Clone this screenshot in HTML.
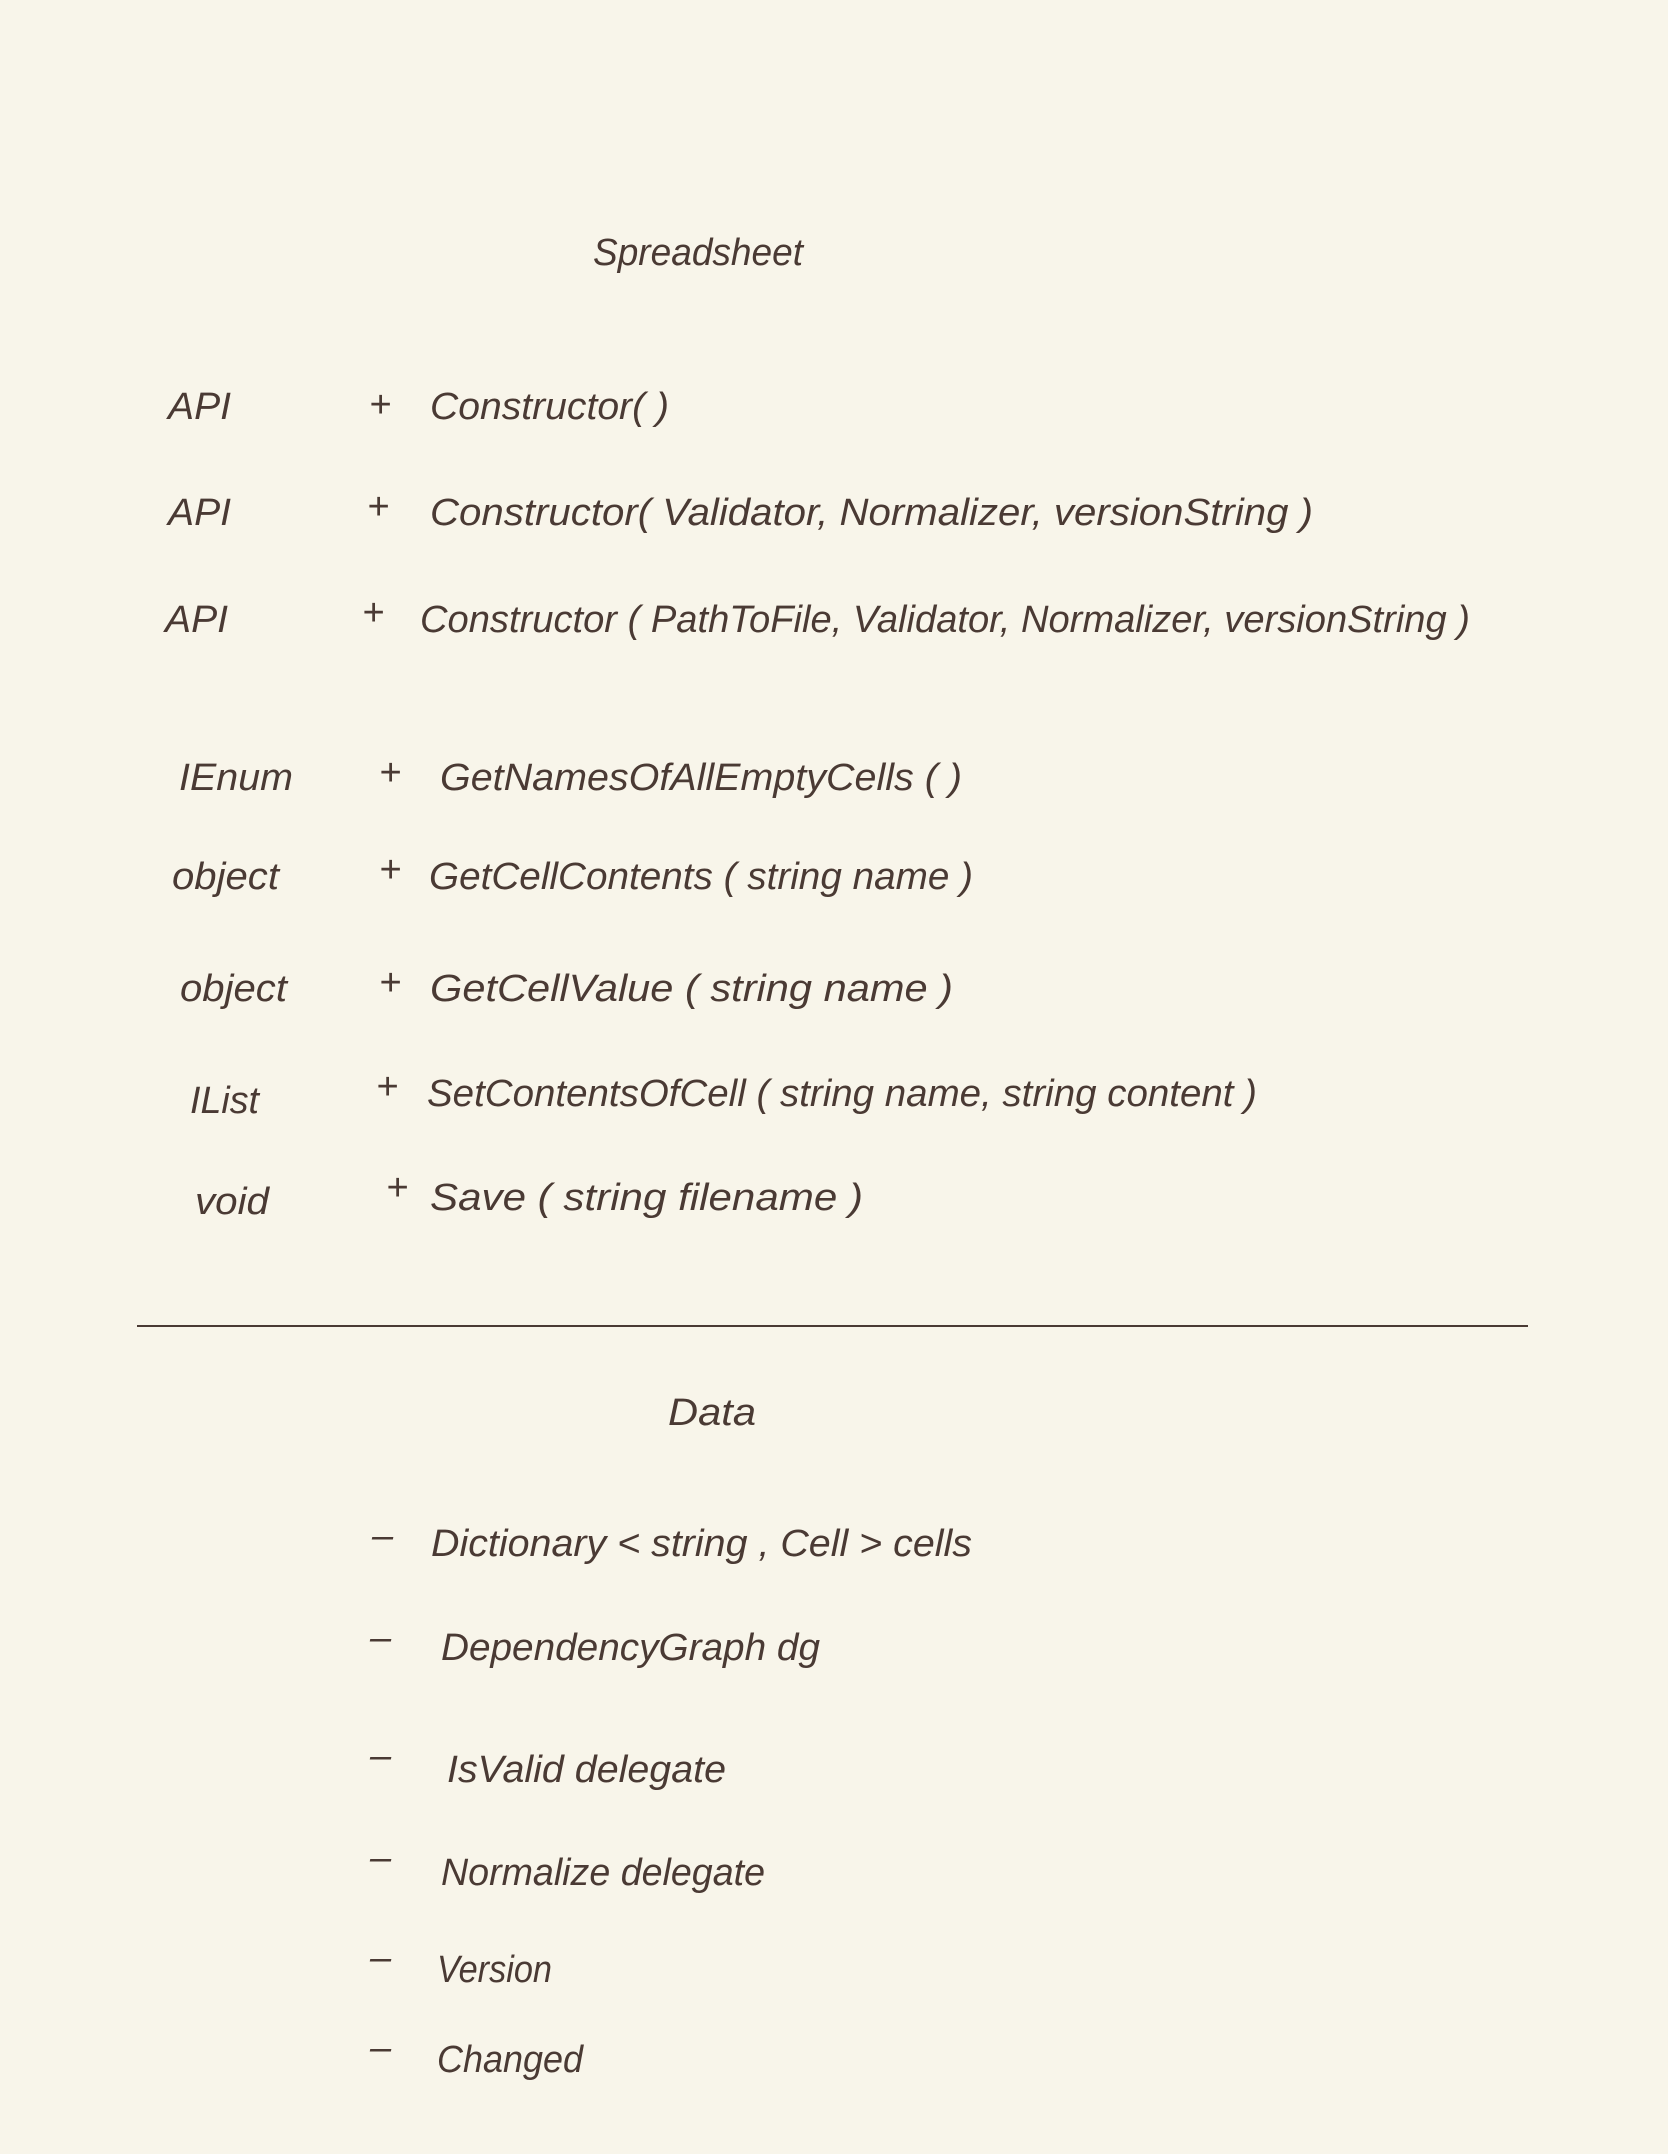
<!DOCTYPE html>
<html><head><meta charset="utf-8"><style>
html,body{margin:0;padding:0;background:#f8f5ea;}
svg{display:block}
text{font-family:"Liberation Sans",sans-serif;fill:#4a3a34;font-size:38px;font-style:italic}
</style></head><body>
<svg width="1668" height="2154" viewBox="0 0 1668 2154" xmlns="http://www.w3.org/2000/svg">
<rect width="1668" height="2154" fill="#f8f5ea"/>
<g lengthAdjust="spacingAndGlyphs">
<text x="593" y="265" textLength="210" lengthAdjust="spacingAndGlyphs" font-size="44">Spreadsheet</text>

<text x="168" y="419" textLength="63" lengthAdjust="spacingAndGlyphs">API</text>
<text x="369" y="417">+</text>
<text x="430" y="419" textLength="239" lengthAdjust="spacingAndGlyphs">Constructor( )</text>

<text x="168" y="525" textLength="63" lengthAdjust="spacingAndGlyphs">API</text>
<text x="367" y="519">+</text>
<text x="430" y="525" textLength="883" lengthAdjust="spacingAndGlyphs">Constructor( Validator,  Normalizer,  versionString  )</text>

<text x="165" y="632" textLength="63" lengthAdjust="spacingAndGlyphs">API</text>
<text x="362" y="625">+</text>
<text x="420" y="632" textLength="1050" lengthAdjust="spacingAndGlyphs">Constructor  ( PathToFile, Validator,  Normalizer, versionString )</text>

<text x="179" y="790" textLength="114" lengthAdjust="spacingAndGlyphs">IEnum</text>
<text x="379" y="785">+</text>
<text x="440" y="790" textLength="522" lengthAdjust="spacingAndGlyphs">GetNamesOfAllEmptyCells ( )</text>

<text x="172" y="889" textLength="107" lengthAdjust="spacingAndGlyphs">object</text>
<text x="379" y="882">+</text>
<text x="429" y="889" textLength="544" lengthAdjust="spacingAndGlyphs">GetCellContents ( string  name )</text>

<text x="180" y="1001" textLength="107" lengthAdjust="spacingAndGlyphs">object</text>
<text x="379" y="995">+</text>
<text x="430" y="1001" textLength="523" lengthAdjust="spacingAndGlyphs">GetCellValue  ( string  name )</text>

<text x="190" y="1113" textLength="69" lengthAdjust="spacingAndGlyphs">IList</text>
<text x="376" y="1099">+</text>
<text x="427" y="1106" textLength="830" lengthAdjust="spacingAndGlyphs">SetContentsOfCell ( string  name,  string  content )</text>

<text x="195" y="1214" textLength="74" lengthAdjust="spacingAndGlyphs">void</text>
<text x="386" y="1200">+</text>
<text x="430" y="1210" textLength="433" lengthAdjust="spacingAndGlyphs">Save ( string  filename )</text>

<line x1="137" y1="1326" x2="1528" y2="1326" stroke="#4a3a34" stroke-width="2"/>

<text x="668" y="1425" textLength="88" lengthAdjust="spacingAndGlyphs">Data</text>

<text x="372" y="1548">–</text>
<text x="431" y="1556" textLength="541" lengthAdjust="spacingAndGlyphs">Dictionary &lt; string , Cell &gt;   cells</text>
<text x="370" y="1650">–</text>
<text x="441" y="1660" textLength="379" lengthAdjust="spacingAndGlyphs">DependencyGraph   dg</text>
<text x="370" y="1768">–</text>
<text x="447" y="1782" textLength="279" lengthAdjust="spacingAndGlyphs">IsValid  delegate</text>
<text x="370" y="1870">–</text>
<text x="441" y="1885" textLength="324" lengthAdjust="spacingAndGlyphs">Normalize  delegate</text>
<text x="370" y="1970">–</text>
<text x="437" y="1982" textLength="115" lengthAdjust="spacingAndGlyphs">Version</text>
<text x="370" y="2060">–</text>
<text x="437" y="2072" textLength="146" lengthAdjust="spacingAndGlyphs">Changed</text>
</g>
</svg>
</body></html>
